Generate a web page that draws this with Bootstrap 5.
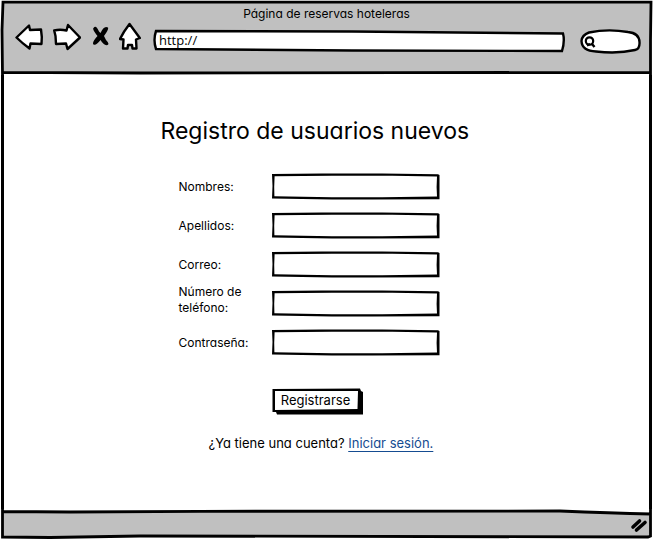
<!DOCTYPE html>
<html lang="es">
<head>
<meta charset="utf-8">
<meta name="viewport" content="width=device-width, initial-scale=1">
<title>Página de reservas hoteleras</title>
<link href="https://cdn.jsdelivr.net/npm/bootstrap@5.3.0/dist/css/bootstrap.min.css" rel="stylesheet">
<style>
body{font-family:Inter,"Open Sans",sans-serif;font-feature-settings:"cv11";font-size:12px;line-height:16px;color:#000;background:#fff}
.sketch{background-repeat:no-repeat;background-size:100% 100%;background-color:transparent;border:0;border-radius:0}
.sketch:focus{background-color:transparent;box-shadow:0 0 0 2px #7aa7e0}
.top-bar{height:75px;background-image:url("data:image/svg+xml,%3Csvg xmlns='http://www.w3.org/2000/svg' viewBox='0 0 653 75' preserveAspectRatio='none'%3E%3Cpath d='M2.500 2H651V72.500H2.500z' fill='%23c0c0c0'/%3E%3Cpath d='M2.500 75L2 30L3 2.200Q300 1.800 651 2.200L650.500 40L650.500 75M2.500 72.300L140 73L400 72.700L651 72.300' fill='none' stroke='%23000' stroke-width='2.800'/%3E%3C/svg%3E")}
.canvas{border:solid #000;border-width:0 3px;margin:0 1px}
.status-bar{height:30px;background-image:url("data:image/svg+xml,%3Csvg xmlns='http://www.w3.org/2000/svg' viewBox='0 0 653 30' preserveAspectRatio='none'%3E%3Cpath d='M2.500 2L560 2Q610 4 651 5V28H2.500z' fill='%23c0c0c0'/%3E%3Cpath d='M2.500 0V28L50 28.500L140 27Q400 28 648 28L650.500 27V0M2.500 2.500L70 3L200 2.300L560 2Q610 4 651 5' fill='none' stroke='%23000' stroke-width='2.800'/%3E%3C/svg%3E")}
.win-title{padding-top:6px}
.tools{gap:10px;padding:0 12px 0 15px}
.tool{display:block;border:0;padding:0;background:none;line-height:0}
.address{height:24px;margin:7px 0 0 1px;padding:0 7px 2px;font:13px/16px "Open Sans",sans-serif;background-image:url("data:image/svg+xml,%3Csvg xmlns='http://www.w3.org/2000/svg' viewBox='0 0 414 24' preserveAspectRatio='none'%3E%3Cpath d='M4 2L200 2.500L411 4.500Q413 12 410 22L200 21.500L4 20Q1 11 4 2z' fill='%23fff' stroke='%23000' stroke-width='2.400'/%3E%3C/svg%3E")}
.find{width:61px;height:26px;margin-top:6px;margin-left:4px;flex:none;padding:0 6px 0 18px;font-size:12px;background-image:url("data:image/svg+xml,%3Csvg xmlns='http://www.w3.org/2000/svg' viewBox='0 0 61 26'%3E%3Cpath d='M9 4.500Q28 .500 48 4Q59 5 59.500 14Q60 21 55 22Q38 26 16 23.500Q2 23 1.500 13Q2 7 9 4.500z' fill='%23fff' stroke='%23000' stroke-width='2.400'/%3E%3Ccircle cx='9.500' cy='13' r='3.700' fill='none' stroke='%23000' stroke-width='2.200'/%3E%3Cpath d='M7 17.500L10 16M12 16L14.500 19' stroke='%23000' stroke-width='2.400'/%3E%3C/svg%3E")}
.sheet{width:308px;margin-right:24px;padding-top:42px}
.heading{font-size:23px;line-height:28px;font-weight:400;margin:0 0 22px}
.fields{padding-left:18px}
.field-row{height:39px}
.field-name{width:93px}
.field-box{width:168px;height:27px;padding:0 8px;font-size:12px;background-image:url("data:image/svg+xml,%3Csvg xmlns='http://www.w3.org/2000/svg' viewBox='0 0 168 27' preserveAspectRatio='none'%3E%3Cpath d='M0 1L50 .600L110 .600L166 1.200L167.500 2L167.500 26.300L100 26.600L60 26.400L0 25.500L.500 13z M2.600 3.200L2.200 14L2.400 23.300L60 24.300L110 24.300L165 23.600L164.600 14L165 3.600L120 2.800L60 2.800z' fill-rule='evenodd'/%3E%3C/svg%3E")}
.send{margin:26px 0 0 93px;width:91px;height:27px;padding:0 3px 3px 0;font-size:13px;line-height:16px;background-image:url("data:image/svg+xml,%3Csvg xmlns='http://www.w3.org/2000/svg' viewBox='0 0 91 27' preserveAspectRatio='none'%3E%3Cpath d='M.500 1L88 .500L89 3L91 4V26.500H5L4 24H.500z'/%3E%3Cpath d='M3 3L86 3L85.500 21L3 22z' fill='%23fff'/%3E%3C/svg%3E")}
.account{margin-top:20px;padding-left:48px;font-size:13px}
.account a{color:#154c91;text-underline-offset:3px}
.grip{margin:9px 5px 0 0}
</style>
</head>
<body>
<div class="d-flex flex-column min-vh-100">
  <header class="sketch top-bar">
    <div class="win-title text-center">Página de reservas hoteleras</div>
    <div class="tools d-flex align-items-start">
      <button class="tool" type="button" aria-label="Atrás"><svg width="28" height="29" viewBox="0 0 28 29"><path d="M1.500 15.500L14 3.500L15 8L26 7.500L26.800 15L26.500 22L15.500 21.500L14.500 26.500Q7 21 1.500 15.500z" fill="#fff" stroke="#000" stroke-width="2.400" stroke-linejoin="round"/></svg></button>
      <button class="tool" type="button" aria-label="Adelante"><svg width="28" height="29" viewBox="0 0 28 29"><path d="M1.200 8.500Q7 7 13.500 8.500L15 3L27 15.500L14.500 27L13 21.500L3 22L2.500 14z" fill="#fff" stroke="#000" stroke-width="2.400" stroke-linejoin="round"/></svg></button>
      <button class="tool" type="button" aria-label="Detener"><svg width="18" height="29" viewBox="0 0 18 29"><path d="M2.500 6Q5 2.500 8 9.500L9.500 11Q13 3 17 5.500Q18 7 13 14L15 18Q19 22 16.500 23Q13 24 9.500 18Q5 24 2.500 22.500Q.500 20.500 6.500 14Q1 7 2.500 6z"/></svg></button>
      <button class="tool" type="button" aria-label="Inicio"><svg width="22" height="29" viewBox="0 0 22 29"><path d="M10.500 2L20.800 16L17 17.500L17.500 26.500H13.500L13 23L9 23L8.500 26.500H4L4.500 17.500L1 17Q5 9 10.500 2z" fill="#fff" stroke="#000" stroke-width="2.400" stroke-linejoin="round"/></svg></button>
      <input class="sketch address flex-grow-1" type="text" value="http://" aria-label="Dirección">
      <input class="sketch find" type="search" aria-label="Buscar">
    </div>
  </header>
  <main class="canvas flex-grow-1 d-flex justify-content-center">
    <form class="sheet">
      <h1 class="heading text-nowrap">Registro de usuarios nuevos</h1>
      <div class="fields">
        <div class="field-row d-flex align-items-center"><label class="field-name" for="nombres">Nombres:</label><input class="sketch field-box" id="nombres" type="text"></div>
        <div class="field-row d-flex align-items-center"><label class="field-name" for="apellidos">Apellidos:</label><input class="sketch field-box" id="apellidos" type="text"></div>
        <div class="field-row d-flex align-items-center"><label class="field-name" for="correo">Correo:</label><input class="sketch field-box" id="correo" type="email"></div>
        <div class="field-row d-flex align-items-center"><label class="field-name align-self-start" for="telefono">Número de teléfono:</label><input class="sketch field-box" id="telefono" type="tel"></div>
        <div class="field-row d-flex align-items-center"><label class="field-name" for="clave">Contraseña:</label><input class="sketch field-box" id="clave" type="password"></div>
        <button class="sketch send" type="submit">Registrarse</button>
      </div>
      <p class="account text-nowrap mb-0">¿Ya tiene una cuenta? <a href="#">Iniciar sesión.</a></p>
    </form>
  </main>
  <footer class="sketch status-bar d-flex justify-content-end">
    <svg class="grip" width="18" height="16" viewBox="0 0 18 16" aria-hidden="true"><path d="M3 9L9.500 3M6.500 12L15 4.500" stroke="#000" stroke-width="3.600" stroke-linecap="round"/></svg>
  </footer>
</div>
<script src="https://cdn.jsdelivr.net/npm/bootstrap@5.3.0/dist/js/bootstrap.bundle.min.js"></script>
</body>
</html>
